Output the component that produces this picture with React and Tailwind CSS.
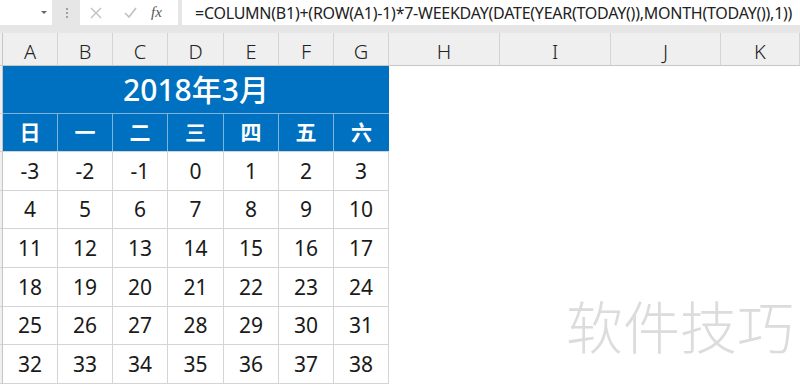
import React from 'react'

const cols = ['A', 'B', 'C', 'D', 'E', 'F', 'G']
const colW = ['w-[55px]', 'w-[55px]', 'w-[55px]', 'w-[56px]', 'w-[55px]', 'w-[55px]', 'w-[55px]']
const rightCols = [
  { name: 'H', w: 'w-[111px]' },
  { name: 'I', w: 'w-[111px]' },
  { name: 'J', w: 'w-[110px]' },
  { name: 'K', w: 'flex-1' },
]
const week = ['日', '一', '二', '三', '四', '五', '六']
const rowH = ['h-[39px]', 'h-[38px]', 'h-[39px]', 'h-[39px]', 'h-[38px]', 'h-[39px]']

const formula = '=COLUMN(B1)+(ROW(A1)-1)*7-WEEKDAY(DATE(YEAR(TODAY()),MONTH(TODAY()),1))'

export default function App() {
  const rows = [0, 1, 2, 3, 4, 5].map(r => cols.map((_, c) => r * 7 + c - 3))

  return (
    <div className="relative w-[800px] h-[388px] overflow-hidden bg-white font-['Noto_Sans','Noto_Sans_CJK_SC',sans-serif]">
      {/* Formula bar */}
      <div className="h-[33px] bg-[#e6e6e6] flex items-start">
        <div className="w-[52px] h-[25px] bg-white relative">
          <div className="absolute left-[41px] top-[11px] w-0 h-0 border-l-[3px] border-r-[3px] border-t-[3px] border-l-transparent border-r-transparent border-t-[#666]" />
        </div>
        <div className="w-[28px] h-[25px] flex flex-col items-center justify-center gap-[2px] pl-[2px]">
          <span className="w-[2px] h-[2px] bg-[#a0a0a0]" />
          <span className="w-[2px] h-[2px] bg-[#a0a0a0]" />
          <span className="w-[2px] h-[2px] bg-[#a0a0a0]" />
        </div>
        <div className="w-[98px] h-[25px] bg-white flex items-center">
          <svg width="12" height="12" viewBox="0 0 12 12" className="ml-[10px]">
            <path d="M1 1L11 11M11 1L1 11" stroke="#bdbdbd" strokeWidth="1.2" fill="none" />
          </svg>
          <svg width="13" height="11" viewBox="0 0 13 11" className="ml-[22px]">
            <path d="M1 6L5 10L12 1" stroke="#bdbdbd" strokeWidth="1.5" fill="none" />
          </svg>
          <span className="ml-[14px] text-[15px] leading-none italic text-[#555] font-['Liberation_Serif',serif]">fx</span>
        </div>
        <div className="ml-[4px] flex-1 h-[25px] bg-white flex items-center pl-[13px]">
          <span className="text-[16px] leading-none text-[#222] whitespace-nowrap tracking-[-0.25px]">{formula}</span>
        </div>
      </div>

      {/* Column headers */}
      <div className="h-[33px] flex bg-[#efefef] border-b border-[#c6c6c6]">
        <div className="w-[3px] border-r border-[#c6c6c6]" />
        {cols.map((c, i) => (
          <div key={c} className={`${colW[i]} border-r border-[#d4d4d4] flex items-end justify-center pb-0 text-[20px] leading-[26px] font-light text-[#222]`}>
            {c}
          </div>
        ))}
        {rightCols.map(c => (
          <div key={c.name} className={`${c.w} border-r border-[#d4d4d4] flex items-end justify-center pb-0 text-[20px] leading-[26px] font-light text-[#222]`}>
            {c.name}
          </div>
        ))}
      </div>

      {/* Sheet body */}
      <div className="flex">
        <div className="w-[3px] bg-[#efefef] border-r border-[#c6c6c6] flex flex-col">
          <div className="h-[48px] border-b border-[#d4d4d4]" />
          <div className="h-[38px] border-b border-[#d4d4d4]" />
          {rowH.map((h, i) => (
            <div key={i} className={`${h} border-b border-[#d4d4d4]`} />
          ))}
        </div>

        <div className="w-[386px] flex flex-col">
          <div className="h-[48px] bg-[#0070c0] border-b border-[#7fb2dc] flex items-center justify-center text-white text-[30px] font-medium leading-none">
            2018年3月
          </div>
          <div className="h-[38px] flex bg-[#0070c0] border-b border-[#d4d4d4]">
            {week.map((w, i) => (
              <div key={w} className={`${colW[i]} ${i < 6 ? 'border-r border-[#7fb2dc]' : ''} flex items-center justify-center text-white text-[21px] font-bold leading-none`}>
                {w}
              </div>
            ))}
          </div>
          {rows.map((r, ri) => (
            <div key={ri} className={`${rowH[ri]} flex border-b border-[#d4d4d4]`}>
              {r.map((v, ci) => (
                <div key={ci} className={`${colW[ci]} border-r border-[#d4d4d4] flex items-center justify-center text-[21px] leading-none text-[#1a1a1a]`}>
                  {v}
                </div>
              ))}
            </div>
          ))}
        </div>
      </div>

      {/* Watermark */}
      <div className="absolute left-[566px] top-[296px] text-[57px] leading-none font-light text-[#dcdcdc] font-['Noto_Sans_CJK_SC',sans-serif] whitespace-nowrap">
        软件技巧
      </div>
    </div>
  )
}
